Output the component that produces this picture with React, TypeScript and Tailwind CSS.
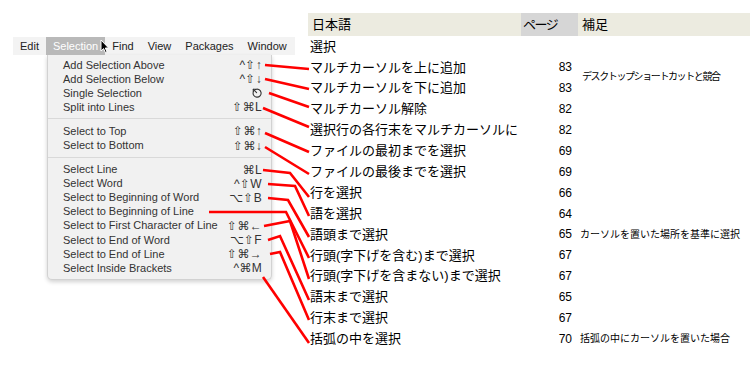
import { Fragment } from 'react';

const menuGroups: [string, string][][] = [
  [
    ['Add Selection Above', '^⇧↑'],
    ['Add Selection Below', '^⇧↓'],
    ['Single Selection', 'esc'],
    ['Split into Lines', '⇧⌘L'],
  ],
  [
    ['Select to Top', '⇧⌘↑'],
    ['Select to Bottom', '⇧⌘↓'],
  ],
  [
    ['Select Line', '⌘L'],
    ['Select Word', '^⇧W'],
    ['Select to Beginning of Word', '⌥⇧B'],
    ['Select to Beginning of Line', ''],
    ['Select to First Character of Line', '⇧⌘←'],
    ['Select to End of Word', '⌥⇧F'],
    ['Select to End of Line', '⇧⌘→'],
    ['Select Inside Brackets', '^⌘M'],
  ],
];

type Row = { jp: string; page?: string; note?: string; span?: boolean; skip?: boolean; tight?: boolean };

const rows: Row[] = [
  { jp: '選択' },
  { jp: 'マルチカーソルを上に追加', page: '83', note: 'デスクトップショートカットと競合', span: true, tight: true },
  { jp: 'マルチカーソルを下に追加', page: '83', skip: true },
  { jp: 'マルチカーソル解除', page: '82' },
  { jp: '選択行の各行末をマルチカーソルに', page: '82' },
  { jp: 'ファイルの最初までを選択', page: '69' },
  { jp: 'ファイルの最後までを選択', page: '69' },
  { jp: '行を選択', page: '66' },
  { jp: '語を選択', page: '64' },
  { jp: '語頭まで選択', page: '65', note: 'カーソルを置いた場所を基準に選択' },
  { jp: '行頭(字下げを含む)まで選択', page: '67' },
  { jp: '行頭(字下げを含まない)まで選択', page: '67' },
  { jp: '語末まで選択', page: '65' },
  { jp: '行末まで選択', page: '67' },
  { jp: '括弧の中を選択', page: '70', note: '括弧の中にカーソルを置いた場合' },
];

// red connector lines, menu shortcut -> japanese row
const links = [
  '265,65 309,69',
  '265,79 309,89',
  '269,93 309,107',
  '263,108 309,127',
  '265,133 309,152',
  '265,147 309,174',
  '263,170 290,173 309,197',
  '268,184 295,186 309,216',
  '268,198 288,200 309,237',
  '209,212 286,212 309,258',
  '264,226 290,221 309,279',
  '268,240 280,236 309,300',
  '270,254 280,252 309,320',
  '263,277 309,343',
];

function EscIcon() {
  return (
    <svg width="10" height="10" viewBox="0 0 10 10" fill="none" stroke="#333" strokeWidth="1.1" strokeLinecap="round">
      <path d="M3.2 1.6 A4 4 0 1 1 1.4 3.6" />
      <path d="M1.3 1.3 L4.6 4.6" />
      <path d="M1.3 1.3 L1.3 3.4 M1.3 1.3 L3.4 1.3" />
    </svg>
  );
}

function Cursor() {
  return (
    <svg width="10" height="15" viewBox="0 0 10 15" className="absolute left-[100px] top-[39px]">
      <path d="M1 1 L1 12 L3.6 9.6 L5.4 13.6 L7 12.9 L5.3 9 L8.6 9 Z" fill="#000" stroke="#fff" strokeWidth="1" />
    </svg>
  );
}

export default function App() {
  return (
    <div className="relative w-[750px] h-[366px] bg-white overflow-hidden flex" style={{ fontFamily: '"Liberation Sans", "DejaVu Sans", sans-serif' }}>
      {/* menu side */}
      <div className="w-[308px] pt-[37px] pl-[13px]">
        <div className="flex h-[18px] w-[282px] bg-[#f3f3f3] text-[11px] text-[#222] items-center">
          <span className="px-[7px]">Edit</span>
          <span className="px-[7px] h-full flex items-center bg-[#b9b9b9] text-white">Selection</span>
          <span className="px-[7px]">Find</span>
          <span className="px-[7px]">View</span>
          <span className="px-[7px]">Packages</span>
          <span className="px-[7px]">Window</span>
        </div>
        <div className="ml-[34px] w-[225px] bg-[#f1f1f1] border-x border-b border-[#d2d2d2] rounded-b-[5px] shadow-[0_2px_4px_rgba(0,0,0,0.18)] pt-[3px] pb-[4px] text-[11px] text-[#333]">
          {menuGroups.map((group, gi) => (
            <Fragment key={gi}>
              {gi > 0 && <div className="mt-[4px] mb-[5px] h-px bg-[#d9d9d9]" />}
              {group.map(([label, key]) => (
                <div key={label} className="h-[14.1px] flex items-center justify-between pl-[15px] pr-[9px] leading-none">
                  <span>{label}</span>
                  {key === 'esc' ? <EscIcon /> : <span className="text-[12px] tracking-[0.3px]">{key}</span>}
                </div>
              ))}
            </Fragment>
          ))}
        </div>
      </div>

      {/* table side */}
      <div className="flex-1 pt-[13px]" style={{ fontFamily: '"Liberation Sans", "Noto Sans CJK JP", sans-serif' }}>
        <div className="grid grid-cols-[213px_57px_1fr] h-[23px] bg-[#ecebe0] text-[13px] text-black items-center">
          <span className="pl-[4px]">日本語</span>
          <span className="h-full flex items-center pl-[2px] bg-[#d6d6d6] tracking-[-1.5px]">ページ</span>
          <span className="pl-[4px]">補足</span>
        </div>
        <div className="grid grid-cols-[213px_57px_1fr] auto-rows-[20.9px] text-black">
          {rows.map((r) => (
            <Fragment key={r.jp}>
              <div className="pl-[2px] text-[13px] flex items-center whitespace-nowrap">{r.jp}</div>
              <div className="pr-[6px] text-[12px] flex items-center justify-end">{r.page}</div>
              {!r.skip && (
                <div className={`text-[10px] flex items-center whitespace-nowrap ${r.span ? 'row-span-2 pl-[4px] pb-[2px]' : 'pl-[2px]'} ${r.tight ? 'tracking-[-1.4px]' : ''}`}>
                  {r.note}
                </div>
              )}
            </Fragment>
          ))}
        </div>
      </div>

      <Cursor />

      <svg className="absolute inset-0 pointer-events-none" width="750" height="366" viewBox="0 0 750 366">
        {links.map((p) => (
          <polyline key={p} points={p} fill="none" stroke="#ff0000" strokeWidth="2.6" strokeLinejoin="miter" />
        ))}
      </svg>
    </div>
  );
}
